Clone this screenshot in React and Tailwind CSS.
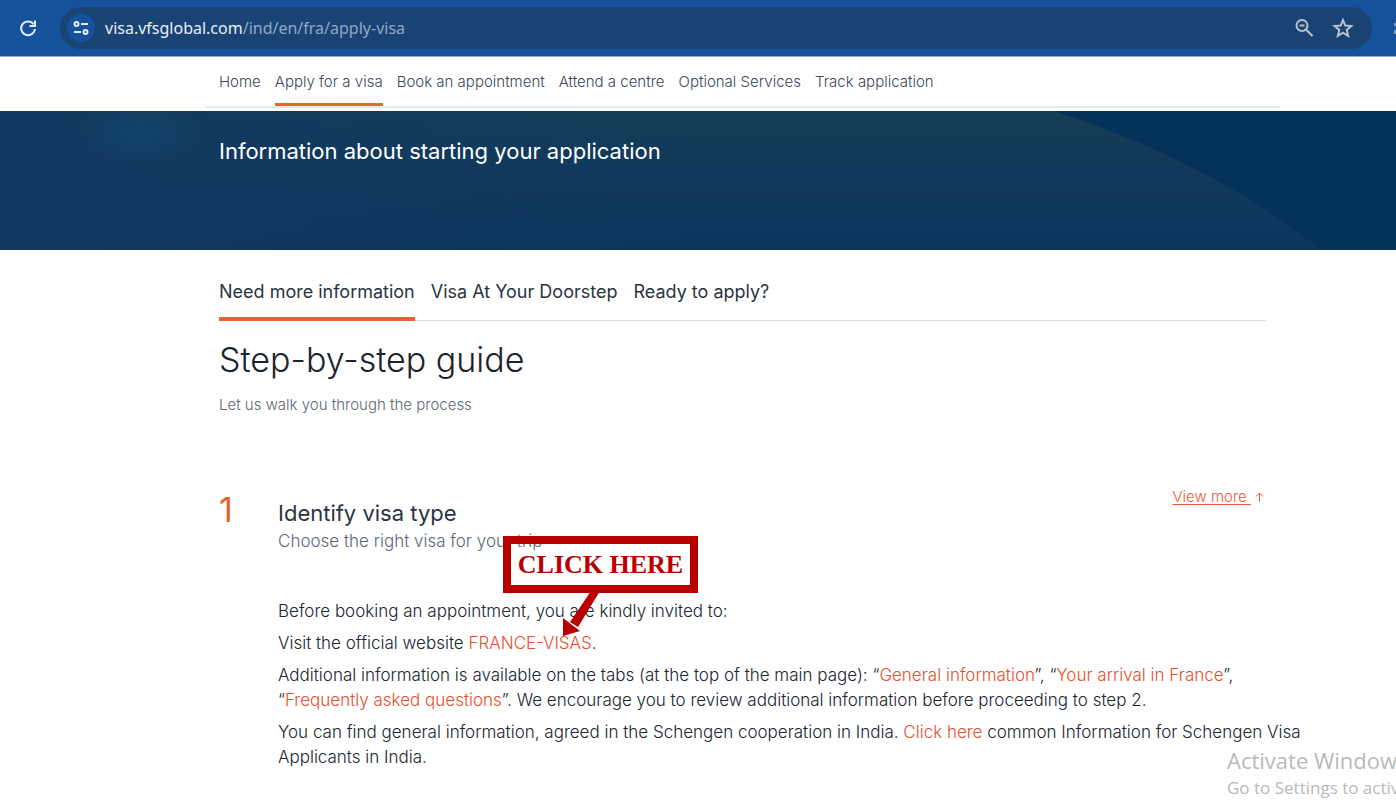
import React, { useState } from "react";

const navItems = [
  "Home",
  "Apply for a visa",
  "Book an appointment",
  "Attend a centre",
  "Optional Services",
  "Track application",
];

const tabs = ["Need more information", "Visa At Your Doorstep", "Ready to apply?"];

const BrowserBar = () => (
  <div className="flex h-[57px] items-center overflow-hidden border-b border-[#8fabd0] bg-[#15529b]">
    <button aria-label="Reload" className="ml-4 shrink-0 text-[#e3edf9]">
      <svg width="24" height="24" viewBox="0 0 24 24" fill="none" stroke="currentColor" strokeWidth="2">
        <path d="M17.6 8.2A6.9 6.9 0 1 0 18.9 13" />
        <path d="M19 4.500V10H13.500" />
      </svg>
    </button>
    <div className="ml-5 flex h-[42px] min-w-0 flex-1 items-center rounded-full bg-[#194373] pr-[18px]">
      <button aria-label="Site information" className="ml-[7px] flex h-7 w-7 shrink-0 items-center justify-center rounded-full bg-[#15529b] text-[#e3edf9]">
        <svg width="18" height="18" viewBox="0 0 18 18" fill="none" stroke="currentColor" strokeWidth="2">
          <circle cx="4.500" cy="5" r="2" />
          <path d="M9 5H16M2 13H9" />
          <circle cx="13.500" cy="13" r="2" />
        </svg>
      </button>
      <input
        aria-label="Address"
        className="sr-only"
        defaultValue="visa.vfsglobal.com/ind/en/fra/apply-visa"
      />
      <p className="ml-[10px] min-w-0 flex-1 truncate font-['Noto_Sans',sans-serif] text-base font-normal text-[#8fa9c8]">
        <span className="text-[#e8f0fa]">visa.vfsglobal.com</span>/ind/en/fra/apply-visa
      </p>
      <button aria-label="Zoom" className="text-[#b9c2cf]">
        <svg width="20" height="20" viewBox="0 0 20 20" fill="none" stroke="currentColor" strokeWidth="2">
          <circle cx="8" cy="7.500" r="5.500" />
          <path d="M5.500 7.500H10.500M12 11.500L18.500 18" />
        </svg>
      </button>
      <button aria-label="Bookmark this page" className="ml-[18px] text-[#b9c2cf]">
        <svg width="22" height="22" viewBox="0 0 20 20" fill="none" stroke="currentColor" strokeWidth="1.8">
          <path d="M10 2.800L12.100 7.800L17.600 8.200L13.400 11.800L14.700 17.100L10 14.200L5.300 17.100L6.600 11.800L2.400 8.200L7.900 7.800Z" />
        </svg>
      </button>
    </div>
    <div className="flex w-6 shrink-0 justify-end">
      <svg width="2" height="16" viewBox="0 0 2 16" fill="#7f9cc4">
        <path d="M0 3H2V6H0ZM0 10H2V14H0Z" />
      </svg>
    </div>
  </div>
);

const SiteNav = ({ active, onSelect }) => (
  <div className="h-[54px] pl-[206px] pr-[116px]">
    <nav className="flex h-[51px] items-stretch gap-[14px] border-b-2 border-[#e7e9ee] px-[13px]">
      {navItems.map((item) => (
        <a
          key={item}
          href="#"
          onClick={() => onSelect(item)}
          className={`flex items-center whitespace-nowrap border-b-3 pt-1 text-[15px] text-[#3c4757] ${
            item === active ? "border-[#d96a34]" : "border-transparent"
          }`}
        >
          {item}
        </a>
      ))}
    </nav>
  </div>
);

const Hero = () => (
  <header className="relative h-[139px] overflow-hidden bg-linear-to-b from-[#153d56] via-[#10395c] to-[#0b365d] pl-[219px] pt-6">
    <svg className="absolute inset-0 h-full w-full" viewBox="0 0 1396 139" preserveAspectRatio="none">
      <defs>
        <linearGradient id="side" x1="0" x2="1" y1="0" y2="0">
          <stop offset="0" stopColor="#133860" />
          <stop offset="1" stopColor="#133860" stopOpacity="0" />
        </linearGradient>
        <radialGradient id="glow">
          <stop offset="0" stopColor="#114468" />
          <stop offset="1" stopColor="#114468" stopOpacity="0" />
        </radialGradient>
      </defs>
      <rect width="700" height="139" fill="url(#side)" />
      <ellipse cx="140" cy="22" rx="65" ry="34" fill="url(#glow)" />
      <path d="M1054 0Q1210 50 1322 139H1396V0Z" fill="#053259" />
    </svg>
    <h2 className="relative text-[22px] font-normal leading-8 text-white">
      Information about starting your application
    </h2>
  </header>
);

const InfoTabs = ({ active, onSelect }) => (
  <div role="tablist" className="flex h-[71px] items-stretch gap-4 border-b border-[#dcdcdc] pt-4">
    {tabs.map((tab) => (
      <button
        key={tab}
        role="tab"
        aria-selected={tab === active}
        onClick={() => onSelect(tab)}
        className={`-mb-px flex items-center whitespace-nowrap border-b-4 text-[18px] font-normal text-[#2b3441] ${
          tab === active ? "border-[#e0662f]" : "border-transparent"
        }`}
      >
        {tab}
      </button>
    ))}
  </div>
);

const TextLink = ({ children }) => (
  <a href="#" className="text-[#e5502e]">
    {children}
  </a>
);

const ClickCallout = () => (
  <div className="absolute left-[225px] top-[50px]">
    <div className="flex h-[57px] w-[195px] items-center justify-center whitespace-nowrap border-8 border-[#b90000] font-['Liberation_Serif',serif] text-[26px] font-bold text-[#b90000]">
      CLICK HERE
    </div>
    <svg className="absolute left-[58px] top-[55px]" width="44" height="48" viewBox="0 0 44 48" fill="#b90000">
      <path d="M30 0H39L17 36L9 31Z" />
      <path d="M2 45V27L19 40Z" />
    </svg>
  </div>
);

const StepOne = () => (
  <section className="mt-[69px] flex">
    <div className="w-[59px] shrink-0 text-[34px] font-normal leading-[48px] text-[#e0662f]">1</div>
    <div className="relative min-w-0 flex-1 pt-[11px]">
      <div className="flex justify-between pr-[42px]">
        <h3 className="text-[22px] font-normal leading-8 text-[#2b3441]">Identify visa type</h3>
        <a href="#" className="-mt-4 flex h-8 items-center gap-1 text-[15px] text-[#e5603a]">
          <span className="whitespace-pre underline underline-offset-2">View more </span>
          <svg width="9" height="10" viewBox="0 0 9 10" fill="none" stroke="currentColor">
            <path d="M4.500 10V1M1 4.500L4.500 1L8 4.500" />
          </svg>
        </a>
      </div>
      <p className="text-[17px] leading-6 text-[#5d6775]">Choose the right visa for your trip</p>
      <div className="mt-[46px] flex flex-col gap-[7px] text-[17px] leading-[25px] text-[#20262f]">
        <p>Before booking an appointment, you are kindly invited to:</p>
        <p>
          Visit the official website <TextLink>FRANCE-VISAS</TextLink>.
        </p>
        <p>
          Additional information is available on the tabs (at the top of the main page): “
          <TextLink>General information</TextLink>”, “<TextLink>Your arrival in France</TextLink>”, “
          <TextLink>Frequently asked questions</TextLink>”. We encourage you to review additional
          information before proceeding to step 2.
        </p>
        <p>
          You can find general information, agreed in the Schengen cooperation in India.{" "}
          <TextLink>Click here</TextLink> common Information for Schengen Visa Applicants in India.
        </p>
      </div>
      <ClickCallout />
    </div>
  </section>
);

const App = () => {
  const [page, setPage] = useState("Apply for a visa");
  const [tab, setTab] = useState("Need more information");

  return (
    <div className="relative min-h-screen overflow-hidden bg-white font-['Inter',sans-serif] font-light">
      <BrowserBar />
      <SiteNav active={page} onSelect={setPage} />
      <Hero />
      <main className="pb-8 pl-[219px] pr-[90px]">
        <div className="pr-10">
          <InfoTabs active={tab} onSelect={setTab} />
          <h1 className="mt-4 text-[34px] leading-[46px] text-[#1c222b]">Step-by-step guide</h1>
          <p className="mt-[10px] text-[15px] leading-6 text-[#5d6775]">Let us walk you through the process</p>
        </div>
        <StepOne />
      </main>

      {/* Windows activation watermark */}
      <div className="absolute bottom-[2px] right-0 w-[169px] overflow-hidden whitespace-nowrap font-['Open_Sans',sans-serif] font-normal text-[#b9b9b9]">
        <p className="text-[22px] leading-7">Activate Windows</p>
        <p className="text-[17px] leading-7">Go to Settings to activate Windows.</p>
      </div>
    </div>
  );
};

export default App;
